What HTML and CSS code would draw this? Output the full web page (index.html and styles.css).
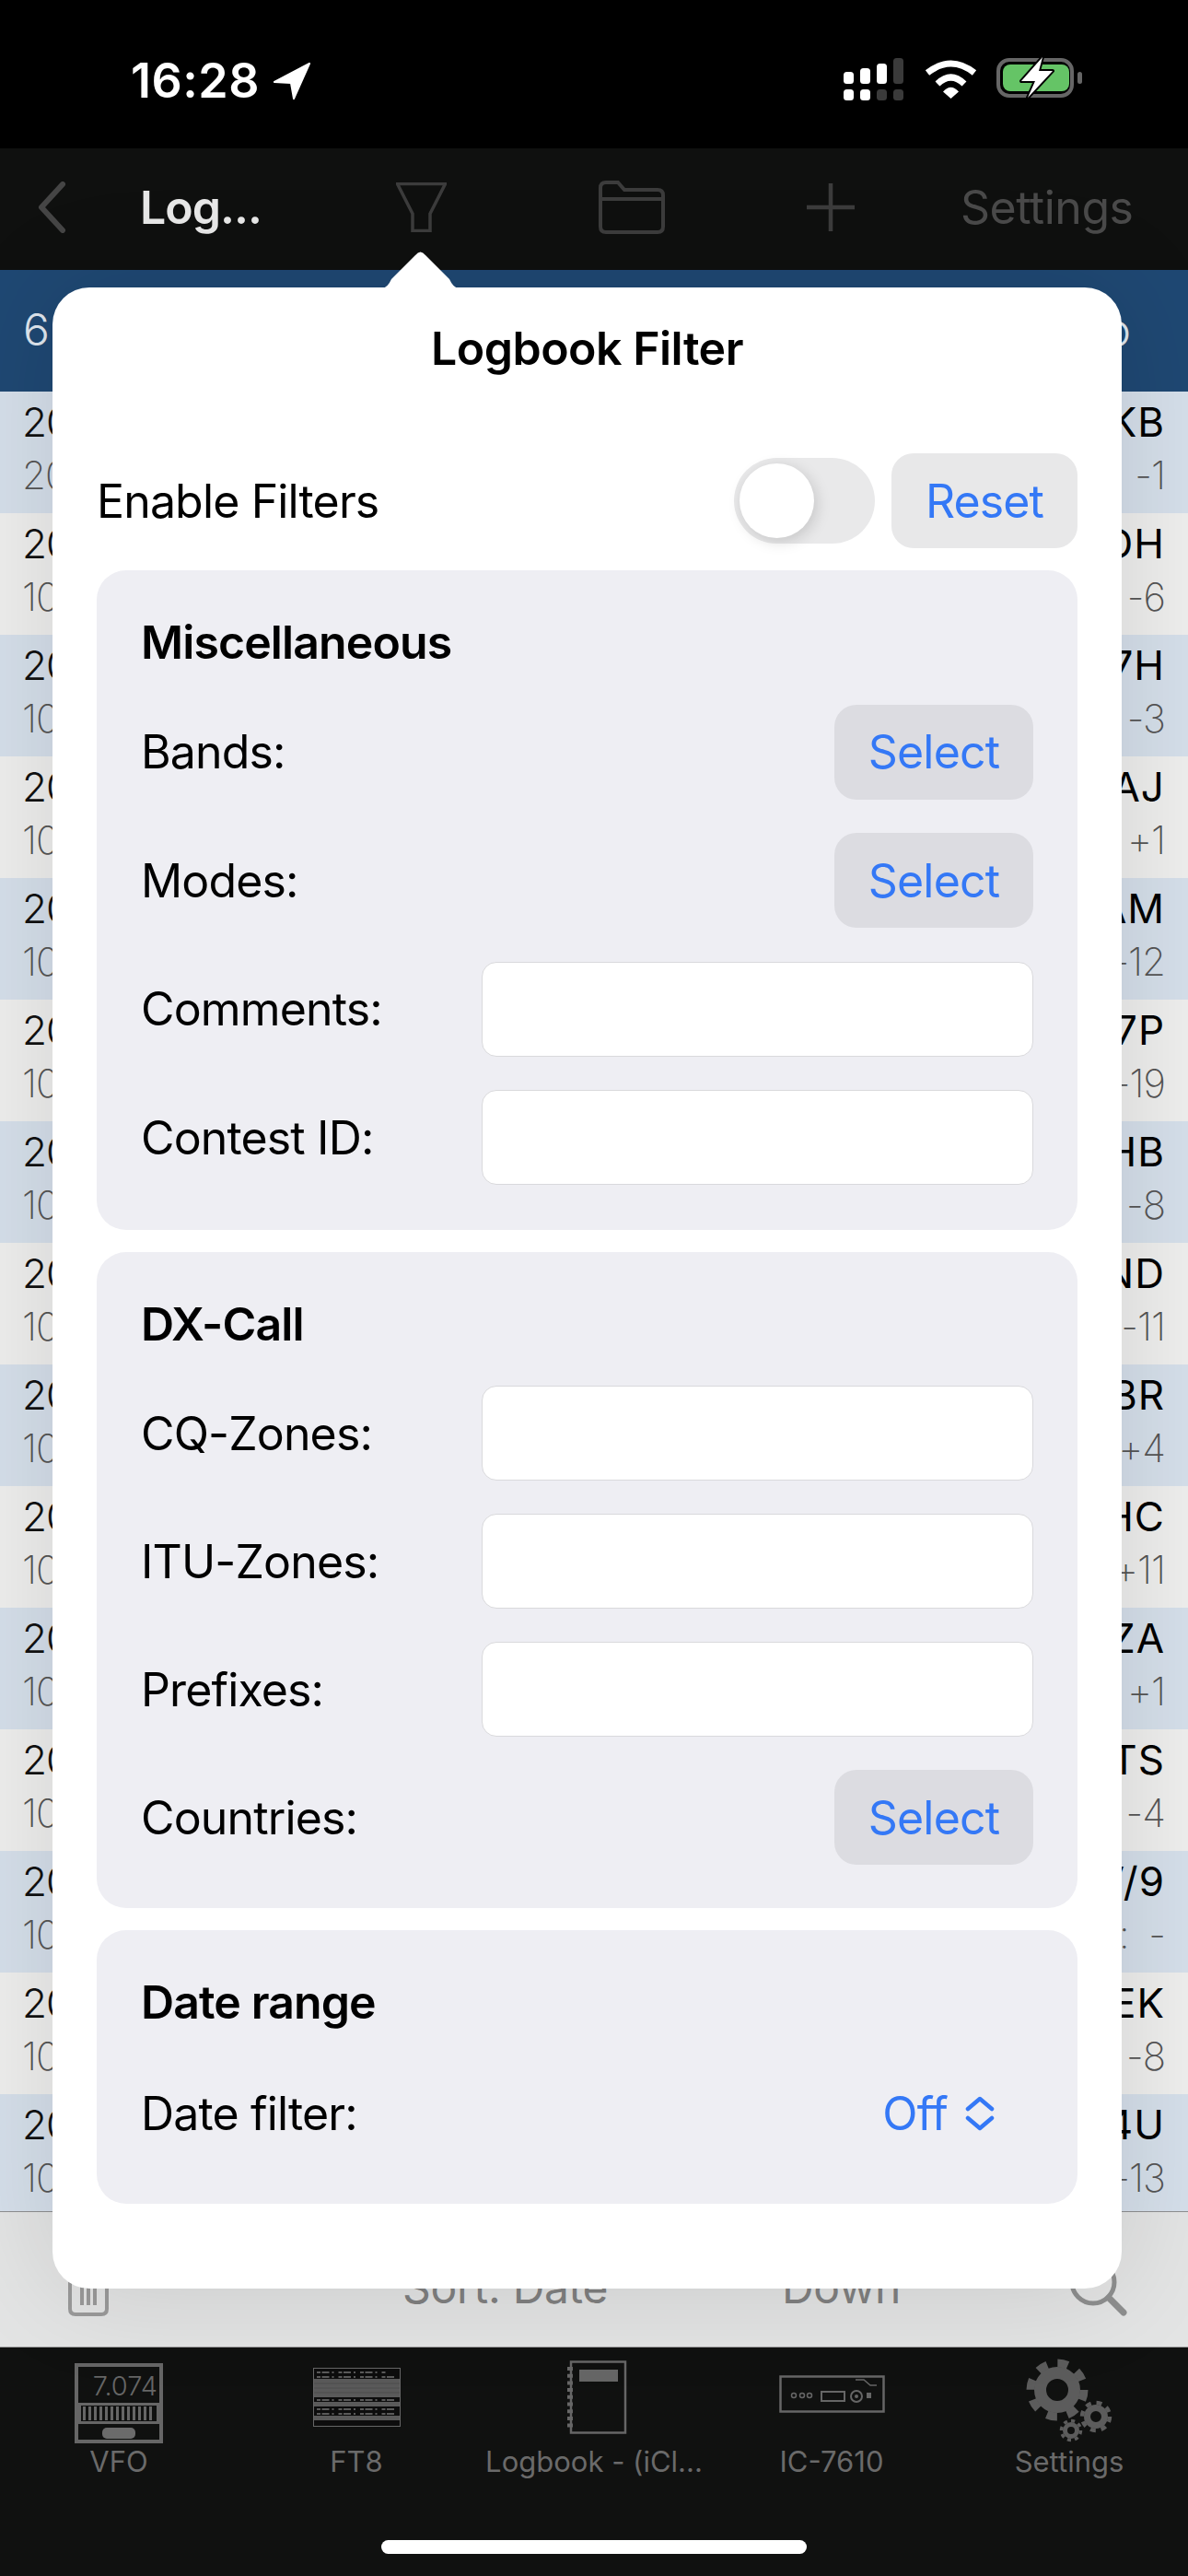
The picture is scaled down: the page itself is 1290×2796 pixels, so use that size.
FILE: index.html
```html
<!DOCTYPE html>
<html>
    <head>
        <meta charset="utf-8">
        <title>Logbook Filter</title>
        <link rel="stylesheet" href="styles.css">
    </head>
    <body>
        <div id="app">
            <!-- status bar -->
            <div class="status">
                <span class="clock">16:28</span>
                <svg class="locate" width="42" height="41" viewBox="0 0 42 41"><path d="M40 1 L2 21 L20 22 L23 39 Z" fill="#fff" stroke="#fff" stroke-width="2" stroke-linejoin="round"/></svg>
                <svg class="signal" width="65" height="46" viewBox="0 0 65 46">
                    <rect x="0" y="15" width="11" height="13" rx="3.5" fill="#fff"/>
                    <rect x="18" y="11" width="11" height="17" rx="3.5" fill="#fff"/>
                    <rect x="36" y="6" width="11" height="22" rx="3.5" fill="#fff"/>
                    <rect x="54" y="0" width="11" height="28" rx="3.5" fill="#3a3a3a"/>
                    <rect x="0" y="34" width="11" height="12" rx="3.5" fill="#fff"/>
                    <rect x="18" y="34" width="11" height="12" rx="3.5" fill="#fff"/>
                    <rect x="36" y="34" width="11" height="12" rx="3.5" fill="#3a3a3a"/>
                    <rect x="54" y="34" width="11" height="12" rx="3.5" fill="#3a3a3a"/>
                </svg>
                <svg class="wifi" width="57" height="42" viewBox="0 0 57 42">
                    <path d="M3 14 Q28.5 -6 54 14" fill="none" stroke="#fff" stroke-width="7"/>
                    <path d="M14 26 Q28.5 12 43 26" fill="none" stroke="#fff" stroke-width="7"/>
                    <path d="M20 34.5 Q28.5 25 37 34.5 L28.5 42 Z" fill="#fff"/>
                </svg>
                <svg class="battery" width="93" height="48" viewBox="0 0 93 48">
                    <rect x="2" y="6" width="80" height="39" rx="12" fill="none" stroke="#666" stroke-width="4"/>
                    <rect x="7" y="11" width="72" height="29" rx="8" fill="#65c466"/>
                    <rect x="88" y="19" width="5" height="13" rx="2.5" fill="#666"/>
                    <path d="M50 3 L27 29 L42 29 L34 47 L61 18 L46 18 Z" fill="#fff" stroke="#000" stroke-width="4" paint-order="stroke" stroke-linejoin="round"/>
                </svg>
            </div>

            <!-- navigation bar -->
            <div class="navbar">
                <svg width="32" height="56" viewBox="0 0 32 56"><path d="M28 3 L5 28 L28 53" fill="none" stroke="#454545" stroke-width="6" stroke-linecap="round" stroke-linejoin="round"/></svg>
                <span class="nav-title">Log...</span>
                <svg width="55" height="54" viewBox="0 0 55 54"><path d="M1.5 1.5 H53.5 L37 34 V52.5 H18 V34 Z" fill="none" stroke="#3c3c3c" stroke-width="3.5"/></svg>
                <svg width="72" height="58" viewBox="0 0 72 58"><path d="M2 50 V8 Q2 2 8 2 H21 L28 10 H64 Q70 10 70 16 V50 Q70 56 64 56 H8 Q2 56 2 50 Z M2 20 H70" fill="none" stroke="#3c3c3c" stroke-width="4"/></svg>
                <svg width="52" height="54" viewBox="0 0 52 54"><path d="M26 1 V53 M0 27 H52" fill="none" stroke="#3c3c3c" stroke-width="4.5"/></svg>
                <span class="nav-link">Settings</span>
            </div>

            <!-- log list behind the popover -->
            <div class="list-head">
                <span>6</span>
                <span>o</span>
            </div>
            <div class="list">
                <div class="row blue"><div class="line"><span>20</span><b>KB</b></div><div class="line sub"><span>20</span><span>-1</span></div></div>
                <div class="row"><div class="line"><span>20</span><b>DH</b></div><div class="line sub"><span>10</span><span>-6</span></div></div>
                <div class="row blue"><div class="line"><span>20</span><b>7H</b></div><div class="line sub"><span>10</span><span>-3</span></div></div>
                <div class="row"><div class="line"><span>20</span><b>AJ</b></div><div class="line sub"><span>10</span><span>+1</span></div></div>
                <div class="row blue"><div class="line"><span>20</span><b>AM</b></div><div class="line sub"><span>10</span><span>-12</span></div></div>
                <div class="row"><div class="line"><span>20</span><b>7P</b></div><div class="line sub"><span>10</span><span>-19</span></div></div>
                <div class="row blue"><div class="line"><span>20</span><b>HB</b></div><div class="line sub"><span>10</span><span>-8</span></div></div>
                <div class="row"><div class="line"><span>20</span><b>ND</b></div><div class="line sub"><span>10</span><span>-11</span></div></div>
                <div class="row blue"><div class="line"><span>20</span><b>BR</b></div><div class="line sub"><span>10</span><span>+4</span></div></div>
                <div class="row"><div class="line"><span>20</span><b>HC</b></div><div class="line sub"><span>10</span><span>+11</span></div></div>
                <div class="row blue"><div class="line"><span>20</span><b>ZA</b></div><div class="line sub"><span>10</span><span>+1</span></div></div>
                <div class="row"><div class="line"><span>20</span><b>TS</b></div><div class="line sub"><span>10</span><span>-4</span></div></div>
                <div class="row blue"><div class="line"><span>20</span><b>V/9</b></div><div class="line sub"><span>10</span><span class="wide">:  -</span></div></div>
                <div class="row"><div class="line"><span>20</span><b>EK</b></div><div class="line sub"><span>10</span><span>-8</span></div></div>
                <div class="row blue"><div class="line"><span>20</span><b>4U</b></div><div class="line sub"><span>10</span><span>-13</span></div></div>
            </div>

            <!-- bottom toolbar -->
            <div class="toolbar">
                <svg width="46" height="60" viewBox="0 0 46 60"><path d="M3 0 V52 Q3 58 9 58 H37 Q43 58 43 52 V0 M16 10 V48 M23 10 V48 M30 10 V48" fill="none" stroke="#9a9a9a" stroke-width="4"/></svg>
                <span>Sort: Date</span>
                <span>Down</span>
                <svg class="search" width="62" height="64" viewBox="0 0 62 64"><circle cx="25" cy="26" r="23" fill="none" stroke="#8e8f8f" stroke-width="5"/><path d="M42 43 L58 59" stroke="#8e8f8f" stroke-width="7" stroke-linecap="round"/></svg>
            </div>

            <!-- tab bar -->
            <div class="tabbar">
                <div class="tab">
                    <svg width="120" height="108" viewBox="0 0 120 108"><g transform="translate(12 17)">
                        <rect x="2" y="2" width="92" height="83" fill="none" stroke="#666" stroke-width="4"/>
                        <text x="90" y="35" class="vfo-digits">7.074</text>
                        <rect x="5.5" y="44.5" width="85" height="20" fill="none" stroke="#666" stroke-width="3"/>
                        <path d="M9 54.5 H87" stroke="#666" stroke-width="15" stroke-dasharray="3 3"/>
                        <rect x="30" y="70" width="36" height="12" rx="5" fill="#6b6b6b"/>
                    </g></svg>
                    <span>VFO</span>
                </div>
                <div class="tab">
                    <svg width="120" height="108" viewBox="0 0 120 108"><g transform="translate(13 22)">
                        <rect x="0.5" y="0.5" width="94" height="63" fill="#0d0d0d" stroke="#666"/>
                        <rect x="1" y="12" width="93" height="20" fill="#5a5a5a"/>
                        <path d="M1 17 H94 M1 22 H94 M1 27 H94" stroke="#4c4c4c"/>
                        <rect x="1" y="37" width="93" height="5" fill="#5a5a5a"/>
                        <rect x="1" y="52" width="93" height="5" fill="#5a5a5a"/>
                        <path d="M4 5 H80 M4 10 H88 M4 35 H90 M4 45 H88 M4 50 H90" stroke="#5a5a5a" stroke-width="2" stroke-dasharray="4 1.5 8 3 2 5"/>
                    </g></svg>
                    <span>FT8</span>
                </div>
                <div class="tab">
                    <svg width="120" height="108" viewBox="0 0 120 108"><g transform="translate(31 14)">
                        <rect x="4" y="1.5" width="59" height="77" fill="none" stroke="#666" stroke-width="2.5"/>
                        <rect x="13" y="10" width="42" height="13" fill="#666"/>
                        <path d="M3 7 V74" stroke="#666" stroke-width="6" stroke-dasharray="4 3.7"/>
                    </g></svg>
                    <span>Logbook - (iCl...</span>
                </div>
                <div class="tab">
                    <svg width="120" height="108" viewBox="0 0 120 108"><g transform="translate(3 30)" fill="none" stroke="#666">
                        <rect x="1.5" y="1.5" width="112" height="38" stroke-width="2.5"/>
                        <circle cx="16" cy="22" r="2.5" stroke-width="1.5"/>
                        <circle cx="25" cy="22" r="2.5" stroke-width="1.5"/>
                        <circle cx="33" cy="22" r="2.5" stroke-width="1.5"/>
                        <rect x="46" y="18" width="25" height="10" stroke-width="2"/>
                        <circle cx="84" cy="23" r="6" stroke-width="2"/>
                        <circle cx="84" cy="23" r="2" fill="#666" stroke="none"/>
                        <rect x="95" y="19" width="5" height="6" fill="#666" stroke="none"/>
                        <path d="M83 5 H92 L99 11 H106" stroke-width="1.5"/>
                    </g></svg>
                    <span>IC-7610</span>
                </div>
                <div class="tab">
                    <svg width="120" height="108" viewBox="0 0 120 108"><g fill="none" stroke="#5c5c5c">
                        <circle cx="47" cy="46" r="18.5" stroke-width="13"/>
                        <circle cx="47" cy="46" r="29" stroke-width="9" stroke-dasharray="11.4 11.4"/>
                        <circle cx="89" cy="75" r="9.5" stroke-width="7"/>
                        <circle cx="89" cy="75" r="15" stroke-width="4.5" stroke-dasharray="5.9 5.9"/>
                        <circle cx="62" cy="90" r="6.5" stroke-width="5"/>
                        <circle cx="62" cy="90" r="10.5" stroke-width="3.5" stroke-dasharray="4.1 4.1"/>
                    </g></svg>
                    <span>Settings</span>
                </div>
            </div>
            <div class="home-bar"></div>

            <!-- filter popover -->
            <div class="popover">
                <svg class="popover-arrow" width="83" height="40" viewBox="0 0 83 40"><path d="M0 40 Q6 39 10 30 L36 4 Q41.5 -3 47 4 L73 30 Q77 39 83 40 Z" fill="#fff"/></svg>
                <h1>Logbook Filter</h1>
                <div class="enable-row">
                    <span>Enable Filters</span>
                    <div class="switch"><div class="knob"></div></div>
                    <button class="btn btn-reset">Reset</button>
                </div>

                <div class="card card-misc">
                    <h2>Miscellaneous</h2>
                    <div class="field-row"><label>Bands:</label><button class="btn">Select</button></div>
                    <div class="field-row"><label>Modes:</label><button class="btn">Select</button></div>
                    <div class="field-row"><label>Comments:</label><input type="text"></div>
                    <div class="field-row"><label>Contest ID:</label><input type="text"></div>
                </div>

                <div class="card card-dx">
                    <h2>DX-Call</h2>
                    <div class="field-row"><label>CQ-Zones:</label><input type="text"></div>
                    <div class="field-row"><label>ITU-Zones:</label><input type="text"></div>
                    <div class="field-row"><label>Prefixes:</label><input type="text"></div>
                    <div class="field-row"><label>Countries:</label><button class="btn">Select</button></div>
                </div>

                <div class="card card-date">
                    <h2>Date range</h2>
                    <div class="field-row">
                        <label>Date filter:</label>
                        <div class="picker">
                            <span>Off</span>
                            <svg width="32" height="38" viewBox="0 0 32 38"><path d="M3 14 L16 3 L29 14 M3 24 L16 35 L29 24" fill="none" stroke="#3478f6" stroke-width="4.5" stroke-linecap="round" stroke-linejoin="round"/></svg>
                        </div>
                    </div>
                </div>
            </div>
        </div>
    </body>
</html>
```

FILE: styles.css
```css
html, body {
    margin: 0;
    padding: 0;
}
body {
    background-color: #101110;
    font-family: Inter, "Liberation Sans", sans-serif;
}
#app {
    position: relative;
    display: flex;
    flex-direction: column;
    width: 1290px;
    height: 2796px;
    overflow: hidden;
    background-color: #101110;
}

/* status bar */
.status {
    position: relative;
    display: flex;
    align-items: flex-start;
    height: 161px;
    padding-left: 142px;
    box-sizing: border-box;
    background-color: #000;
    color: #fff;
}
.clock {
    width: 154px;
    margin-top: 59px;
    font-size: 52px;
    line-height: 58px;
    font-weight: 600;
    letter-spacing: .5px;
}
.locate {
    margin-top: 68px;
}
.signal {
    margin: 63px 0 0 578px;
}
.wifi {
    margin: 65px 0 0 23px;
}
.battery {
    margin: 59px 0 0 21px;
}

/* navigation bar */
.navbar {
    display: grid;
    grid-template-columns: 112px 278px 220px 226px 167px auto;
    align-items: center;
    height: 132px;
    padding: 0 0 4px 40px;
    box-sizing: border-box;
    background-color: #0f100f;
}
.nav-title {
    font-size: 50px;
    font-weight: 600;
    color: #e8e8e8;
    letter-spacing: -1px;
}
.nav-link {
    font-size: 50px;
    color: #4a4a4a;
    letter-spacing: -.5px;
}

/* list behind the popover */
.list-head {
    display: flex;
    justify-content: space-between;
    height: 132px;
    padding: 32px 62px 0 25px;
    box-sizing: border-box;
    background-color: #1f4873;
    color: #dfe6ee;
    font-size: 48px;
    font-weight: 300;
    line-height: 66px;
}
.list {
    height: 1975px;
    overflow: hidden;
    border-bottom: 1px solid #8e8f90;
}
.row {
    height: 132px;
    padding: 4px 25px 0 24px;
    box-sizing: border-box;
    background-color: #eeeeed;
}
.row.blue {
    background-color: #d5dfea;
}
.line {
    display: flex;
    justify-content: space-between;
    height: 58px;
    line-height: 58px;
    font-size: 44px;
    font-weight: 300;
    letter-spacing: -1px;
    color: #111;
}
.line b {
    font-size: 44px;
    font-weight: 400;
    color: #000;
    letter-spacing: 1px;
}
.sub {
    font-weight: 200;
    font-size: 42px;
    color: #555;
}
.wide {
    white-space: pre;
}

/* bottom toolbar */
.toolbar {
    display: grid;
    grid-template-columns: 364px 412px 313px auto;
    align-items: start;
    height: 147px;
    padding: 53px 0 0 73px;
    box-sizing: border-box;
    background-color: #e3e4e4;
    border-bottom: 1px solid #999;
    color: #808080;
    font-size: 48px;
    line-height: 58px;
    letter-spacing: -.3px;
}
.search {
    margin-top: -3px;
}

/* tab bar */
.tabbar {
    display: grid;
    grid-template-columns: repeat(5, 258px);
    background-color: #101110;
}
.tab {
    display: flex;
    flex-direction: column;
    align-items: center;
    color: #6a6a6a;
    font-size: 31px;
    line-height: 32px;
    white-space: nowrap;
}
.vfo-digits {
    font-family: Inter, sans-serif;
    font-size: 29px;
    font-weight: 300;
    fill: #666;
    stroke: none;
    text-anchor: end;
}
.home-bar {
    position: absolute;
    left: 414px;
    top: 2757px;
    width: 462px;
    height: 15px;
    border-radius: 8px;
    background-color: #fff;
}

/* filter popover */
.popover {
    position: absolute;
    left: 57px;
    top: 312px;
    width: 1161px;
    height: 2172px;
    padding: 0 48px;
    box-sizing: border-box;
    border-radius: 40px;
    background-color: #fff;
    box-shadow: 0 0 120px rgba(0, 0, 0, .12);
}
.popover-arrow {
    position: absolute;
    left: 358px;
    top: -39px;
}
.popover h1 {
    margin: 0;
    height: 132px;
    font-size: 50px;
    font-weight: 600;
    line-height: 132px;
    text-align: center;
    letter-spacing: -.5px;
    color: #000;
}
.enable-row {
    display: flex;
    align-items: center;
    height: 103px;
    margin: 48px 0 24px;
    font-size: 50px;
    letter-spacing: -.85px;
    color: #000;
}
.enable-row span {
    flex: 1;
}
.switch {
    width: 153px;
    height: 93px;
    margin-right: 18px;
    padding: 6px;
    box-sizing: border-box;
    border-radius: 47px;
    background-color: #e9e9ea;
}
.knob {
    width: 81px;
    height: 81px;
    border-radius: 50%;
    background-color: #fff;
    box-shadow: 3px 4px 16px rgba(0, 0, 0, .15);
}
.btn {
    width: 216px;
    height: 103px;
    padding: 0;
    border: 0;
    border-radius: 24px;
    background-color: #dcdce1;
    color: #3478f6;
    font-family: Inter, sans-serif;
    font-size: 50px;
    letter-spacing: -.85px;
}
.btn-reset {
    width: 202px;
    background-color: #e8e8e9;
}
.card {
    display: flex;
    flex-direction: column;
    margin-bottom: 24px;
    padding: 47px 48px;
    border-radius: 32px;
    background-color: #eeeef3;
}
.card-misc {
    gap: 36.5px;
    padding-bottom: 49px;
}
.card-dx {
    gap: 36px;
}
.card-date {
    gap: 38px;
}
.card h2 {
    margin: 0;
    height: 62px;
    font-size: 50px;
    font-weight: 600;
    line-height: 62px;
    letter-spacing: -.9px;
    color: #000;
}
.field-row {
    display: flex;
    justify-content: space-between;
    align-items: center;
    height: 103px;
    font-size: 50px;
    letter-spacing: -.85px;
    color: #000;
}
.field-row input {
    width: 599px;
    height: 103px;
    padding: 0;
    box-sizing: border-box;
    border: 1px solid #d9d9dc;
    border-radius: 16px;
    background-color: #fff;
}
.picker {
    display: flex;
    align-items: center;
    gap: 19px;
    margin-right: 42px;
    color: #3478f6;
}
```
